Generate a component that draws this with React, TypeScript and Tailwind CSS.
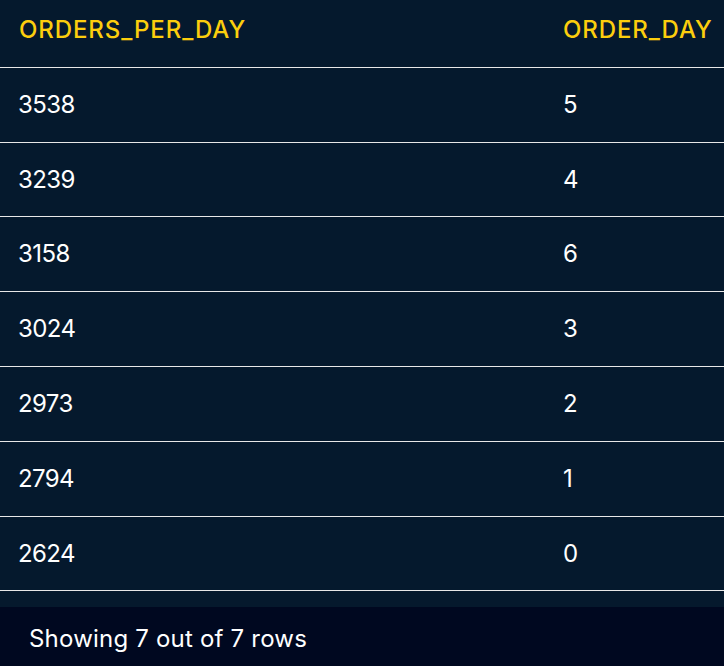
const rows = [
  { count: 3538, day: 5, h: 'h-[75px]' },
  { count: 3239, day: 4, h: 'h-[74px]' },
  { count: 3158, day: 6, h: 'h-[75px]' },
  { count: 3024, day: 3, h: 'h-[75px]' },
  { count: 2973, day: 2, h: 'h-[75px]' },
  { count: 2794, day: 1, h: 'h-[75px]' },
  { count: 2624, day: 0, h: 'h-[74px]' },
];

export default function App() {
  return (
    <div className="flex h-[666px] w-[724px] flex-col overflow-hidden bg-[#05192d] font-['Inter',sans-serif]">
      <div className="pb-4">
        <div className="grid h-[68px] grid-cols-[544px_1fr] items-center border-b border-[#e8e8e8] pb-2 pl-[19px] text-[24px] font-medium tracking-[0.9px] text-[#fcce0d]">
          <div>ORDERS_PER_DAY</div>
          <div>ORDER_DAY</div>
        </div>
        {rows.map((r) => (
          <div
            key={r.count}
            className={`grid ${r.h} grid-cols-[544px_1fr] items-center border-b border-[#e8e8e8] pl-[18px] text-[24px] tracking-[-0.6px] text-white`}
          >
            <div>{r.count}</div>
            <div className="pl-[1px]">{r.day}</div>
          </div>
        ))}
      </div>
      <div className="flex h-[59px] items-center bg-[#000820] pl-[29px] pt-1 text-[24px] tracking-[0.2px] text-white">
        Showing 7 out of 7 rows
      </div>
    </div>
  );
}
